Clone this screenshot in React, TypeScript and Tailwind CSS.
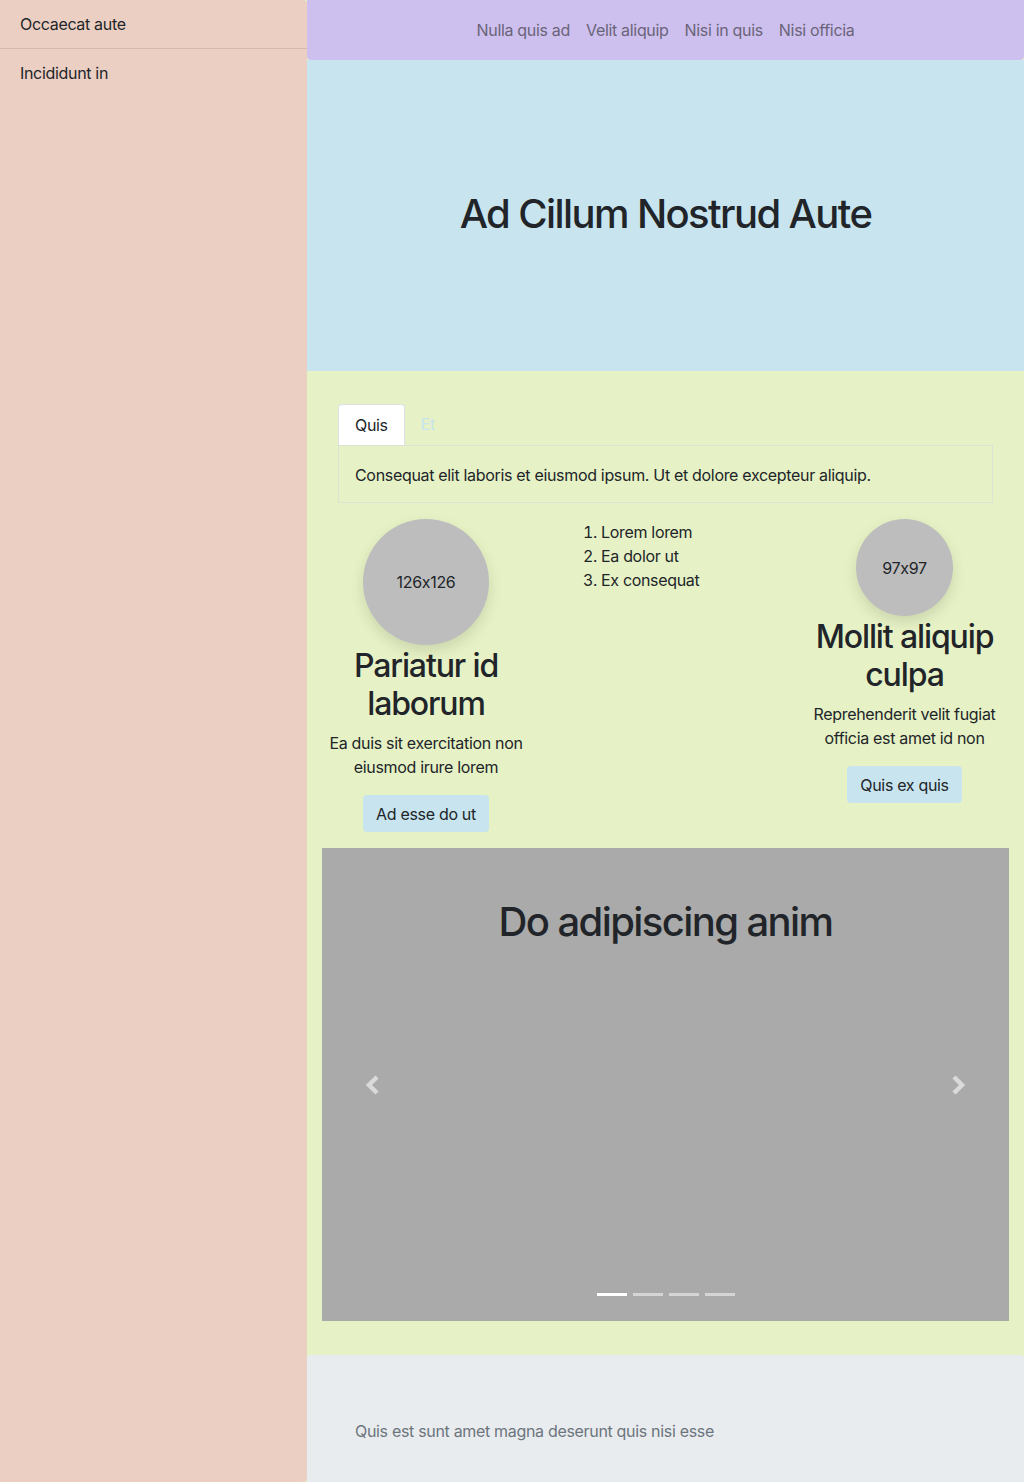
const navLinks = ["Nulla quis ad", "Velit aliquip", "Nisi in quis", "Nisi officia"];

function Sidebar() {
  return (
    <aside className="w-[307px] shrink-0 bg-[#eccfc3] rounded-r-[4px] text-[#212529]">
      <div className="h-[49px] px-5 pb-[1px] flex items-center border-b border-[#d5b9ae]">Occaecat aute</div>
      <div className="h-[48px] px-5 flex items-center">Incididunt in</div>
    </aside>
  );
}

function Feature({
  size,
  title,
  text,
  button,
}: {
  size: number;
  title: string;
  text: string;
  button: string;
}) {
  return (
    <div className="flex flex-col items-center text-center">
      <div
        className="rounded-full bg-[#bdbdbd] shadow-[0_6px_14px_rgba(0,0,0,0.12)] flex items-center justify-center text-[#212529] [font-feature-settings:'calt'_0]"
        style={{ width: size, height: size }}
      >
        {size}x{size}
      </div>
      <h2 className="mt-[2px] mb-2 text-[32px] leading-[38px] font-medium tracking-[-0.035em] text-[#212529]">{title}</h2>
      <p className="mb-4 text-[#212529]">{text}</p>
      <button className="bg-[#c7e4ef] text-[#212529] rounded-[4px] px-[13px] h-[37px]">{button}</button>
    </div>
  );
}

function Chevron({ dir }: { dir: "left" | "right" }) {
  return (
    <svg width="20" height="24" viewBox="0 0 20 24" className="text-[#dadada]">
      <polyline
        points={dir === "left" ? "13,4 5,12 13,20" : "7,4 15,12 7,20"}
        fill="none"
        stroke="currentColor"
        strokeWidth="4.5"
      />
    </svg>
  );
}

function Carousel() {
  return (
    <div className="relative bg-[#aaaaaa] h-[473px] pt-[50px]">
      <h2 className="text-center text-[40px] leading-[48px] font-medium tracking-[-0.04em] text-[#212529]">Do adipiscing anim</h2>
      <div className="absolute left-[42px] top-[225px]">
        <Chevron dir="left" />
      </div>
      <div className="absolute right-[42px] top-[225px]">
        <Chevron dir="right" />
      </div>
      <div className="absolute bottom-[25px] left-0 right-0 flex justify-center gap-[6px]">
        <span className="w-[30px] h-[3px] bg-white" />
        <span className="w-[30px] h-[3px] bg-white/50" />
        <span className="w-[30px] h-[3px] bg-white/50" />
        <span className="w-[30px] h-[3px] bg-white/50" />
      </div>
    </div>
  );
}

export default function App() {
  return (
    <div className="flex min-h-[1482px] bg-[#e6f2c5] font-['Inter',sans-serif] text-base leading-6 tracking-[-0.02em]">
      <Sidebar />
      <div className="flex-1 flex flex-col">
        <nav className="h-[60px] bg-[#cdc0ee] rounded-b-[4px] flex items-center justify-center">
          {navLinks.map((l) => (
            <a key={l} className="px-2 text-[#6b6479]">
              {l}
            </a>
          ))}
        </nav>
        <header className="h-[311px] bg-[#c7e4ef] flex items-center justify-center">
          <h1 className="text-[40px] leading-[48px] font-medium tracking-[-0.04em] text-[#212529] -mt-[4px]">
            Ad Cillum Nostrud Aute
          </h1>
        </header>
        <main className="px-[15px] pt-[33px] pb-[34px]">
          <div className="px-4">
            <div className="flex">
              <div className="px-4 py-2 bg-white border border-b-0 border-[#dee2e6] rounded-t-[4px] text-[#212529]">
                Quis
              </div>
              <div className="px-4 py-2 text-[#c7e4ef]">Et</div>
            </div>
            <div className="border border-[#dde3d2] pt-[17px] pb-[15px] px-4 text-[#212529]">
              Consequat elit laboris et eiusmod ipsum. Ut et dolore excepteur aliquip.
            </div>
          </div>
          <div className="grid grid-cols-[208px_1fr_209px] mt-4 mb-4">
            <Feature
              size={126}
              title="Pariatur id laborum"
              text="Ea duis sit exercitation non eiusmod irure lorem"
              button="Ad esse do ut"
            />
            <div className="pl-[39px] pt-[1px]">
              <ol className="list-decimal pl-8 text-[#212529]">
                <li>Lorem lorem</li>
                <li>Ea dolor ut</li>
                <li>Ex consequat</li>
              </ol>
            </div>
            <Feature
              size={97}
              title="Mollit aliquip culpa"
              text="Reprehenderit velit fugiat officia est amet id non"
              button="Quis ex quis"
            />
          </div>
          <Carousel />
        </main>
        <footer className="bg-[#e9ecef] rounded-t-[4px] pt-16 pb-[39px] px-12 text-[#6c757d]">
          Quis est sunt amet magna deserunt quis nisi esse
        </footer>
      </div>
    </div>
  );
}
